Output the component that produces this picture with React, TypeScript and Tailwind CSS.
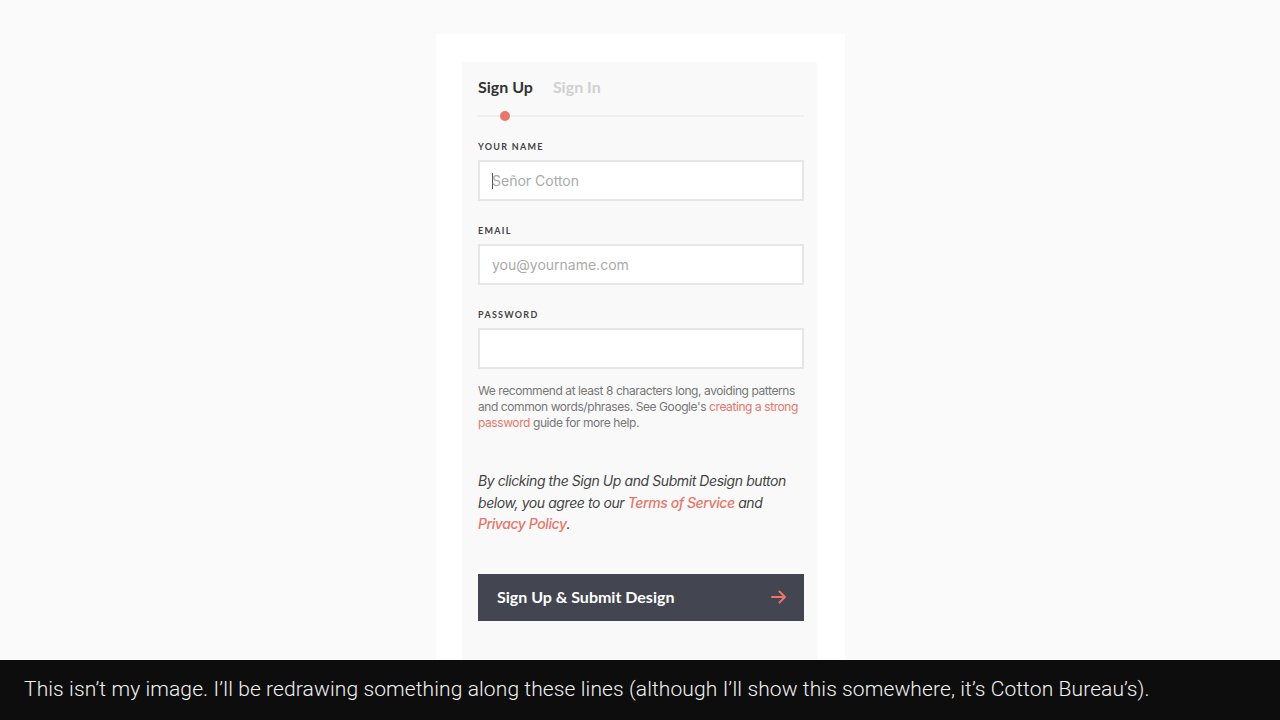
import React from "react";

function Field({ label, placeholder, caret }: { label: string; placeholder?: string; caret?: boolean }) {
  return (
    <div className="flex flex-col">
      <label className="text-[9px] font-bold tracking-[0.14em] text-[#444] leading-none font-['Lato',sans-serif]">
        {label}
      </label>
      <div className="mt-[9px] h-[41px] bg-white border-2 border-[#e6e6e6] flex items-center pl-[12px] text-[14px] text-[#aaa] font-['Inter',sans-serif]">
        {caret && <span className="w-px h-[16px] bg-[#555] mr-[-1px]" />}
        {placeholder}
      </div>
    </div>
  );
}

export default function App() {
  return (
    <div className="h-screen flex flex-col bg-[#fafafa] overflow-hidden">
      <div className="flex-1 flex justify-center pt-[34px] overflow-hidden">
        <div className="w-[409px] bg-white pl-[26px] pr-[28px] pt-[28px] ml-[1px]">
          <div className="h-full bg-[#f9f9f9] pl-[16px] pr-[13px] pt-[13px]">
            <div className="flex gap-[20px] text-[16px] font-bold font-['Lato',sans-serif]">
              <span className="text-[#333]">Sign Up</span>
              <span className="text-[#d0d0d0]">Sign In</span>
            </div>
            <div className="relative mt-[16px] h-[2px] bg-[#efefef]">
              <span className="absolute left-[22px] top-[-4px] w-[10px] h-[10px] rounded-full bg-[#e8766a]" />
            </div>
            <div className="mt-[25px] flex flex-col gap-[25px]">
              <Field label="YOUR NAME" placeholder="Señor Cotton" caret />
              <Field label="EMAIL" placeholder="you@yourname.com" />
              <Field label="PASSWORD" />
            </div>
            <p className="mt-[14px] text-[12px] leading-[16px] text-[#777] font-['Inter',sans-serif] tracking-[-0.035em]">
              We recommend at least 8 characters long, avoiding patterns and common words/phrases. See Google's{" "}
              <span className="text-[#e8766a]">creating a strong password</span> guide for more help.
            </p>
            <p className="mt-[39px] text-[14px] leading-[21.5px] italic text-[#444] font-['Inter',sans-serif] tracking-[-0.03em]">
              By clicking the Sign Up and Submit Design button below, you agree to our{" "}
              <span className="text-[#e8766a] font-medium">Terms of Service</span> and{" "}
              <span className="text-[#e8766a] font-medium">Privacy Policy</span>.
            </p>
            <button className="mt-[39px] w-full h-[47px] bg-[#434651] flex items-center justify-between pl-[19px] pr-[17px] text-white text-[16px] font-bold font-['Lato',sans-serif]">
              <span>Sign Up &amp; Submit Design</span>
              <svg width="16" height="14" viewBox="0 0 16 14" fill="none" stroke="#e8766a" strokeWidth="2" strokeLinecap="round" strokeLinejoin="round">
                <path d="M1 7h13M8.5 1.5 14 7l-5.5 5.5" />
              </svg>
            </button>
          </div>
        </div>
      </div>
      <div className="h-[60px] shrink-0 bg-[#0d0d0d] flex items-center pl-[24px] text-[#f2f2f2] text-[21px] tracking-[0.005em] font-light font-['Roboto',sans-serif]">
        This isn’t my image. I’ll be redrawing something along these lines (although I’ll show this somewhere, it’s Cotton Bureau’s).
      </div>
    </div>
  );
}
